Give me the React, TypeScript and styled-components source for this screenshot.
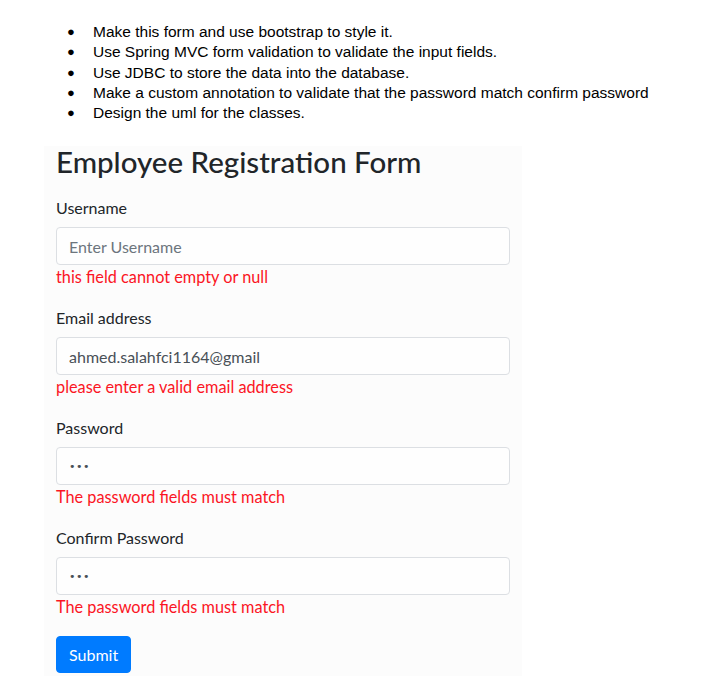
import React from "react";
import styled, { createGlobalStyle } from "styled-components";

const Global = createGlobalStyle`
  html, body { margin: 0; padding: 0; background: #ffffff; }
  * { box-sizing: border-box; }
`;

const Page = styled.div`
  display: flex;
  flex-direction: column;
  padding-top: 22px;
`;

const TaskList = styled.ul`
  list-style: none;
  margin: 0;
  padding: 0 0 0 67px;
  font-family: "Liberation Sans", Arial, sans-serif;
  font-size: 15.5px;
  color: #000;
`;

const TaskItem = styled.li`
  display: flex;
  align-items: center;
  height: 20.3px;
  line-height: 20px;
`;

const Bullet = styled.span`
  width: 26px;
  flex: none;
  font-size: 13px;
`;

const Panel = styled.form`
  margin: 23px 0 0 44px;
  width: 478px;
  background: #fcfcfc;
  padding: 0 12px 3px 12px;
  font-family: Lato, "Segoe UI", sans-serif;
  color: #212529;
`;

const Title = styled.h2`
  margin: 0 0 18px 0;
  font-size: 29.5px;
  font-weight: 500;
  line-height: 32px;
  color: #212529;
`;

const Group = styled.div`
  display: flex;
  flex-direction: column;
  margin-bottom: 17px;
`;

const Label = styled.label`
  font-size: 16px;
  line-height: 24px;
  margin-bottom: 7px;
`;

const Input = styled.input<{ $mask?: boolean }>`
  height: 38px;
  width: 100%;
  padding: 6px 12px;
  font-family: ${(p) => (p.$mask ? '"DejaVu Sans", sans-serif' : 'Lato, "Segoe UI", sans-serif')};
  font-size: ${(p) => (p.$mask ? "11px" : "16px")};
  letter-spacing: ${(p) => (p.$mask ? "0.5px" : "normal")};
  color: #495057;
  background: #fefefe;
  border: 1px solid #dcdfe3;
  border-radius: 4px;
  outline: none;
  &::placeholder { color: #6c757d; }
`;

const Error = styled.div`
  font-size: 16.3px;
  line-height: 24px;
  color: #fb1524;
`;

const Submit = styled.button`
  align-self: flex-start;
  height: 37px;
  padding: 6px 12px;
  font-family: Lato, "Segoe UI", sans-serif;
  font-size: 16px;
  color: #fff;
  background: #007bff;
  border: 1px solid #007bff;
  border-radius: 4px;
`;

const tasks = [
  "Make this form and use bootstrap to style it.",
  "Use Spring MVC form validation to validate the input fields.",
  "Use JDBC to store the data into the database.",
  "Make a custom annotation to validate that the password match confirm password",
  "Design the uml for the classes.",
];

const fields = [
  { label: "Username", type: "text", placeholder: "Enter Username", value: "", error: "this field cannot empty or null" },
  { label: "Email address", type: "text", placeholder: "", value: "ahmed.salahfci1164@gmail", error: "please enter a valid email address" },
  { label: "Password", type: "password", placeholder: "", value: "123", error: "The password fields must match" },
  { label: "Confirm Password", type: "password", placeholder: "", value: "123", error: "The password fields must match" },
];

export default function App() {
  return (
    <Page>
      <Global />
      <TaskList>
        {tasks.map((t) => (
          <TaskItem key={t}>
            <Bullet>●</Bullet>
            <span>{t}</span>
          </TaskItem>
        ))}
      </TaskList>
      <Panel onSubmit={(e) => e.preventDefault()}>
        <Title>Employee Registration Form</Title>
        {fields.map((f) => (
          <Group key={f.label + f.error}>
            <Label>{f.label}</Label>
            <Input
              type={f.type}
              $mask={f.type === "password"}
              placeholder={f.placeholder}
              defaultValue={f.value}
              readOnly
            />
            <Error>{f.error}</Error>
          </Group>
        ))}
        <Submit type="submit">Submit</Submit>
      </Panel>
    </Page>
  );
}
